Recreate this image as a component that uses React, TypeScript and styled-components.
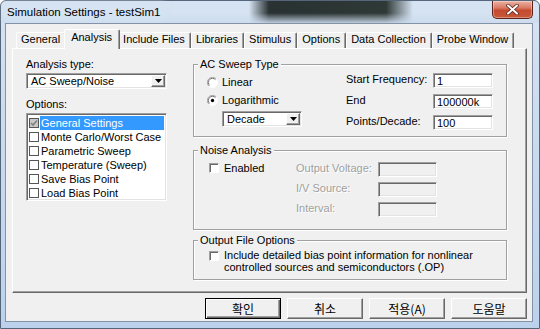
import React from "react";
import styled, { createGlobalStyle, css } from "styled-components";

const GlobalStyle = createGlobalStyle`
  html, body {
    margin: 0;
    padding: 0;
    background: #ffffff;
  }
  body {
    font-family: "Liberation Sans", Arial, sans-serif;
    font-size: 11px;
    color: #000000;
  }
  * {
    box-sizing: border-box;
  }
`;

const sunken = css`
  border: 1px solid;
  border-color: #a0a0a0 #ffffff #ffffff #a0a0a0;
  box-shadow: inset 1px 1px #696969, inset -1px -1px #e3e3e3;
`;

const raised = css`
  border: 1px solid;
  border-color: #ffffff #696969 #696969 #ffffff;
  box-shadow: inset -1px -1px #a0a0a0;
`;

const Window = styled.div`
  width: 540px;
  height: 329px;
  display: flex;
  flex-direction: column;
  padding: 0 6px 6px 4px;
  border: 1px solid #56667a;
  border-radius: 6px 6px 0 0;
  background: linear-gradient(180deg, #d6e3f2 0%, #c5d8ee 60%, #bcd2ec 100%);
`;

const TitleBar = styled.div`
  height: 22px;
  display: flex;
  align-items: flex-start;
  margin: 0 -6px 0 -4px;
  padding-left: 6px;
  background:
    linear-gradient(180deg, rgba(214, 227, 242, 0) 0%, rgba(214, 227, 242, 0) 55%, rgba(205, 220, 238, 0.9) 100%),
    linear-gradient(90deg, rgba(28, 36, 36, 0) 248px, rgba(28, 36, 36, 0.93) 268px, rgba(34, 44, 40, 0.93) 385px, rgba(28, 36, 36, 0) 412px);
`;

const Title = styled.span`
  margin-top: 4px;
  font-size: 11.5px;
  line-height: 14px;
  color: #000000;
  background: rgba(214, 227, 242, 0.55);
  box-shadow: 0 0 6px 4px rgba(214, 227, 242, 0.55);
`;

const CloseButton = styled.div`
  margin-left: auto;
  margin-right: 6px;
  width: 41px;
  height: 18px;
  display: flex;
  align-items: center;
  justify-content: center;
  border: 1px solid #5b2219;
  border-top: none;
  border-radius: 0 0 5px 5px;
  background: linear-gradient(180deg, #eab2a4 0%, #d97a63 40%, #c44a30 55%, #c9573a 100%);
  box-shadow: inset 0 0 0 1px rgba(255, 255, 255, 0.35);
`;

const Client = styled.div`
  flex: 1;
  display: flex;
  flex-direction: column;
  padding: 5px 5px 0 6px;
  background: #f0f0f0;
  border: 1px solid #8293a8;
`;

const TabRow = styled.div`
  position: relative;
  z-index: 1;
  height: 19px;
  display: flex;
  align-items: flex-end;
  padding-left: 4px;
`;

const Tab = styled.div<{ $active?: boolean }>`
  position: relative;
  z-index: ${(p) => (p.$active ? 2 : 1)};
  height: ${(p) => (p.$active ? 20 : 16)}px;
  margin: 0 ${(p) => (p.$active ? -2 : 0)}px ${(p) => (p.$active ? -1 : 0)}px;
  padding: 0 ${(p) => (p.$active ? 7 : 5)}px ${(p) => (p.$active ? 4 : 2)}px
    ${(p) => (p.$active ? 6 : 4)}px;
  display: flex;
  align-items: center;
  white-space: nowrap;
  line-height: 13px;
  background: #f0f0f0;
  border: 1px solid;
  border-bottom: none;
  border-color: #ffffff #696969 transparent #ffffff;
  border-radius: 2px 2px 0 0;
  box-shadow: inset -1px 0 #a0a0a0;
`;

const Panel = styled.div`
  height: 245px;
  display: flex;
  gap: 26px;
  padding: 8px 17px 0 13px;
  background: #f0f0f0;
  border: 1px solid;
  border-color: #ffffff #696969 #696969 #ffffff;
  box-shadow: inset -1px -1px #a0a0a0;
`;

const LeftColumn = styled.div`
  width: 141px;
  display: flex;
  flex-direction: column;
`;

const FieldLabel = styled.div<{ $gap?: number }>`
  height: 14px;
  line-height: 14px;
  margin-top: ${(p) => p.$gap ?? 0}px;
  margin-bottom: 2px;
`;

const Select = styled.div<{ $width?: number }>`
  ${sunken};
  width: ${(p) => (p.$width ? `${p.$width}px` : "100%")};
  height: 16px;
  display: flex;
  align-items: center;
  padding: 1px 1px 1px 4px;
  background: #ffffff;
  line-height: 13px;
`;

const SelectText = styled.span`
  flex: 1;
`;

const DropButton = styled.span`
  ${raised};
  width: 14px;
  height: 12px;
  display: flex;
  align-items: center;
  justify-content: center;
  background: #f0f0f0;
`;

const ListBox = styled.div`
  ${sunken};
  height: 88px;
  padding: 2px 2px;
  background: #ffffff;
  display: flex;
  flex-direction: column;
`;

const ListItem = styled.div`
  height: 14px;
  display: flex;
  align-items: center;
  padding-left: 0;
`;

const ListCheck = styled.span<{ $grey?: boolean }>`
  width: 10px;
  height: 10px;
  flex-shrink: 0;
  display: flex;
  align-items: center;
  justify-content: center;
  border: 1px solid #555555;
  background: ${(p) => (p.$grey ? "#c8c8c8" : "#ffffff")};
  margin-right: 1px;
`;

const ListLabel = styled.span<{ $selected?: boolean }>`
  flex: 1;
  height: 14px;
  line-height: 14px;
  padding-left: 1px;
  white-space: nowrap;
  color: ${(p) => (p.$selected ? "#ffffff" : "#000000")};
  background: ${(p) => (p.$selected ? "#3399ff" : "transparent")};
`;

const RightColumn = styled.div`
  width: 314px;
  display: flex;
  flex-direction: column;
`;

const Group = styled.div<{ $top: number }>`
  margin-top: ${(p) => p.$top}px;
  border: 1px solid #a0a0a0;
  box-shadow: inset 1px 1px #ffffff, 1px 1px #ffffff;
  display: flex;
  flex-direction: column;
`;

const GroupTitle = styled.div`
  align-self: flex-start;
  margin: -7px 0 0 4px;
  padding: 0 2px;
  height: 13px;
  line-height: 13px;
  background: #f0f0f0;
`;

const SweepBody = styled.div`
  display: flex;
  padding: 2px 13px 6px 13px;
`;

const RadioColumn = styled.div`
  display: flex;
  flex-direction: column;
  gap: 4px;
  padding-top: 2px;
`;

const RadioRow = styled.div`
  height: 14px;
  display: flex;
  align-items: center;
  gap: 4px;
`;

const Indent = styled.div`
  margin-left: 15px;
`;

const FieldGrid = styled.div<{ $cols: string; $gap: number }>`
  display: grid;
  grid-template-columns: ${(p) => p.$cols};
  row-gap: ${(p) => p.$gap}px;
  align-items: center;
  margin-left: auto;
`;

const GridLabel = styled.span<{ $disabled?: boolean }>`
  line-height: 13px;
  margin-top: -2px;
  white-space: nowrap;
  color: ${(p) => (p.$disabled ? "#a0a0a0" : "#000000")};
  text-shadow: ${(p) => (p.$disabled ? "1px 1px #ffffff" : "none")};
`;

const TextBox = styled.input<{ $disabled?: boolean }>`
  ${sunken};
  width: 100%;
  height: 15px;
  margin: 0;
  padding: 0 2px 0 3px;
  font: inherit;
  font-size: 11px;
  line-height: 13px;
  color: #000000;
  outline: none;
  border-radius: 0;
  background: ${(p) => (p.$disabled ? "#f0f0f0" : "#ffffff")};
`;

const NoiseBody = styled.div`
  display: grid;
  grid-template-columns: 87px 82px 59px;
  row-gap: 5px;
  align-items: center;
  padding: 5px 0 12px 15px;
`;

const CheckRow = styled.div`
  display: flex;
  align-items: center;
  gap: 5px;
  align-self: start;
  height: 11px;
`;

const CheckBox = styled.span`
  ${sunken};
  width: 10px;
  height: 10px;
  flex-shrink: 0;
  background: #ffffff;
  box-shadow: inset 1px 1px #696969;
`;

const OutputBody = styled.div`
  display: flex;
  align-items: flex-start;
  gap: 5px;
  padding: 2px 0 6px 15px;
`;

const OutputText = styled.span`
  line-height: 12px;
`;

const TopCheck = styled(CheckBox)`
  margin-top: 2px;
`;

const ButtonRow = styled.div`
  display: flex;
  justify-content: flex-end;
  gap: 6px;
  margin-top: 5px;
`;

const DialogButton = styled.button<{ $default?: boolean }>`
  width: 76px;
  height: 21px;
  margin: 0;
  padding: 0;
  font-family: "Noto Sans CJK KR", "Liberation Sans", sans-serif;
  font-size: 12px;
  line-height: 1;
  color: #000000;
  background: #f0f0f0;
  border: 1px solid;
  border-radius: 0;
  ${(p) =>
    p.$default
      ? css`
          border-color: #000000;
          box-shadow: inset 1px 1px #ffffff, inset -1px -1px #696969, inset -2px -2px #a0a0a0;
        `
      : css`
          border-color: #ffffff #696969 #696969 #ffffff;
          box-shadow: inset -1px -1px #a0a0a0;
        `}
`;

const Arrow = () => (
  <svg width="7" height="4" viewBox="0 0 7 4">
    <path d="M0 0 H7 L3.5 4 Z" fill="#000000" />
  </svg>
);

const Radio = ({ checked }: { checked?: boolean }) => (
  <svg width="11" height="11" viewBox="0 0 12 12">
    <circle cx="6" cy="6" r="5.2" fill="#ffffff" />
    <path d="M10 2 A5.5 5.5 0 0 0 2 10" fill="none" stroke="#a0a0a0" strokeWidth="1" />
    <path d="M9.2 2.8 A4.5 4.5 0 0 0 2.8 9.2" fill="none" stroke="#696969" strokeWidth="1" />
    <path d="M2 10 A5.5 5.5 0 0 0 10 2" fill="none" stroke="#ffffff" strokeWidth="1" />
    {checked && <circle cx="6" cy="6" r="1.8" fill="#000000" />}
  </svg>
);

const CloseGlyph = () => (
  <svg width="13" height="11" viewBox="0 0 13 11">
    <path d="M2 1.5 L11 9.5 M11 1.5 L2 9.5" stroke="#5a2a22" strokeWidth="3.6" strokeLinecap="round" />
    <path d="M2 1.5 L11 9.5 M11 1.5 L2 9.5" stroke="#ffffff" strokeWidth="2" strokeLinecap="round" />
  </svg>
);

const tabs = [
  "General",
  "Analysis",
  "Include Files",
  "Libraries",
  "Stimulus",
  "Options",
  "Data Collection",
  "Probe Window",
];

const options = [
  "General Settings",
  "Monte Carlo/Worst Case",
  "Parametric Sweep",
  "Temperature (Sweep)",
  "Save Bias Point",
  "Load Bias Point",
];

const sweepFields = [
  { label: "Start Frequency:", value: "1" },
  { label: "End", value: "100000k" },
  { label: "Points/Decade:", value: "100" },
];

const noiseFields = ["Output Voltage:", "I/V Source:", "Interval:"];

const App: React.FunctionComponent = () => {
  return (
    <>
      <GlobalStyle />
      <Window>
        <TitleBar>
          <Title>Simulation Settings - testSim1</Title>
          <CloseButton>
            <CloseGlyph />
          </CloseButton>
        </TitleBar>
        <Client>
          <TabRow>
            {tabs.map((t) => (
              <Tab key={t} $active={t === "Analysis"}>
                {t}
              </Tab>
            ))}
          </TabRow>
          <Panel>
            <LeftColumn>
              <FieldLabel>Analysis type:</FieldLabel>
              <Select>
                <SelectText>AC Sweep/Noise</SelectText>
                <DropButton>
                  <Arrow />
                </DropButton>
              </Select>
              <FieldLabel $gap={8}>Options:</FieldLabel>
              <ListBox>
                {options.map((o, i) => (
                  <ListItem key={o}>
                    <ListCheck $grey={i === 0}>
                      {i === 0 && (
                        <svg width="8" height="8" viewBox="0 0 8 8">
                          <path d="M1 4 L3 6 L7 1.5" fill="none" stroke="#808080" strokeWidth="1.6" />
                        </svg>
                      )}
                    </ListCheck>
                    <ListLabel $selected={i === 0}>{o}</ListLabel>
                  </ListItem>
                ))}
              </ListBox>
            </LeftColumn>

            <RightColumn>
              <Group $top={7}>
                <GroupTitle>AC Sweep Type</GroupTitle>
                <SweepBody>
                  <RadioColumn>
                    <RadioRow>
                      <Radio />
                      <span>Linear</span>
                    </RadioRow>
                    <RadioRow>
                      <Radio checked />
                      <span>Logarithmic</span>
                    </RadioRow>
                    <Indent>
                      <Select $width={80}>
                        <SelectText>Decade</SelectText>
                        <DropButton>
                          <Arrow />
                        </DropButton>
                      </Select>
                    </Indent>
                  </RadioColumn>
                  <FieldGrid $cols="87px 60px" $gap={6}>
                    {sweepFields.map((f) => (
                      <React.Fragment key={f.label}>
                        <GridLabel>{f.label}</GridLabel>
                        <TextBox readOnly value={f.value} />
                      </React.Fragment>
                    ))}
                  </FieldGrid>
                </SweepBody>
              </Group>

              <Group $top={13}>
                <GroupTitle>Noise Analysis</GroupTitle>
                <NoiseBody>
                  {noiseFields.map((f, i) => (
                    <React.Fragment key={f}>
                      {i === 0 ? (
                        <CheckRow>
                          <CheckBox />
                          <span>Enabled</span>
                        </CheckRow>
                      ) : (
                        <span />
                      )}
                      <GridLabel $disabled>{f}</GridLabel>
                      <TextBox readOnly disabled $disabled value="" />
                    </React.Fragment>
                  ))}
                </NoiseBody>
              </Group>

              <Group $top={10}>
                <GroupTitle>Output File Options</GroupTitle>
                <OutputBody>
                  <TopCheck />
                  <OutputText>
                    Include detailed bias point information for nonlinear
                    <br />
                    controlled sources and semiconductors (.OP)
                  </OutputText>
                </OutputBody>
              </Group>
            </RightColumn>
          </Panel>
          <ButtonRow>
            <DialogButton $default>확인</DialogButton>
            <DialogButton>취소</DialogButton>
            <DialogButton>적용(A)</DialogButton>
            <DialogButton>도움말</DialogButton>
          </ButtonRow>
        </Client>
      </Window>
    </>
  );
};

export default App;
